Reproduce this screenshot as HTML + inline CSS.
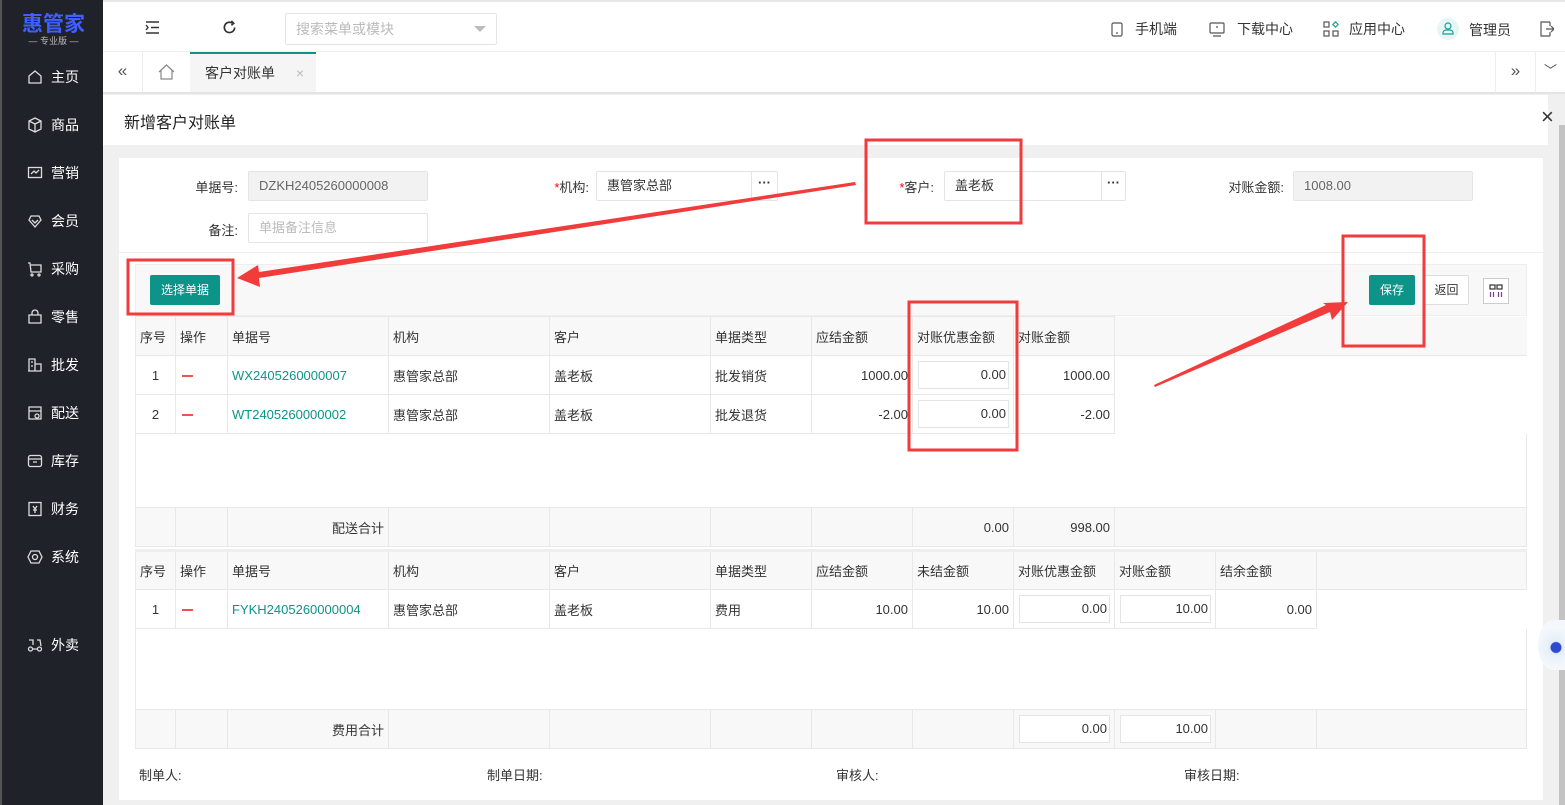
<!DOCTYPE html>
<html><head><meta charset="utf-8">
<style>
*{box-sizing:border-box;margin:0;padding:0}
body{width:1565px;height:805px;overflow:hidden;position:relative;background:#f0f0f0;font-family:"Liberation Sans","Noto Sans CJK SC",sans-serif;font-size:13px;color:#333}
.abs{position:absolute}
#side{left:0;top:0;width:103px;height:805px;background:#1f2228;border-left:2px solid #555}
.logo{left:0;top:8px;width:103px;text-align:center;color:#3f5fff;font-weight:bold;font-size:21px;letter-spacing:0}
.logo2{left:0;top:34px;width:103px;text-align:center;color:#bbb;font-size:9px}
.nav{left:25px;color:#fff;font-size:14px;display:flex;align-items:center}
.nav svg{margin-right:8px}
#head{left:103px;top:0;width:1462px;height:52px;background:#fff;border-top:2px solid #e8e8e8;border-bottom:1px solid #eee}
#tabs{left:103px;top:52px;width:1462px;height:42px;background:#fff;border-bottom:2px solid #e4e4e4}
#title{left:103px;top:95px;width:1445px;height:50px;background:#fff}
#card{left:119px;top:158px;width:1424px;height:642px;background:#fff}
.inp{position:absolute;height:30px;border:1px solid #e4e4e4;border-radius:2px;padding-left:10px;line-height:28px;font-size:13px}
.lbl{position:absolute;font-size:13px;text-align:right}
table{border-collapse:collapse;position:absolute;table-layout:fixed}
td{border:1px solid #e8e8e8;height:39px;padding:0 4px;font-size:13px;white-space:nowrap}
.g{background:#f8f8f8}
.r{text-align:right}.c{text-align:center}
.lnk{color:#0d9488}
.dash::before{content:"";display:inline-block;width:11px;height:2px;background:#f0524f;vertical-align:middle;margin-left:2px}
.box{display:inline-block;width:91px;height:28px;border:1px solid #e4e4e4;line-height:26px;text-align:right;padding-right:2px;background:#fff}
</style></head><body>
<div id="side" class="abs">
<div class="abs logo">惠管家</div>
<div class="abs logo2">— 专业版 —</div>
<div class="abs nav" style="top:67px"><svg width="16" height="16" viewBox="0 0 16 16" fill="none" stroke="#ddd" stroke-width="1.3"><path d="M2 7L8 2l6 5v7H2z"/></svg>主页</div>
<div class="abs nav" style="top:115px"><svg width="16" height="16" viewBox="0 0 16 16" fill="none" stroke="#ddd" stroke-width="1.3"><path d="M8 1l6 3v8l-6 3-6-3V4zM2 4l6 3 6-3M8 7v8"/></svg>商品</div>
<div class="abs nav" style="top:163px"><svg width="16" height="16" viewBox="0 0 16 16" fill="none" stroke="#ddd" stroke-width="1.3"><rect x="1.5" y="2.5" width="13" height="10"/><path d="M4 9l3-3 2 2 3-3"/></svg>营销</div>
<div class="abs nav" style="top:211px"><svg width="16" height="16" viewBox="0 0 16 16" fill="none" stroke="#ddd" stroke-width="1.3"><path d="M8 14L2 7l2-4h8l2 4z"/><path d="M5 7l3 3 3-3"/></svg>会员</div>
<div class="abs nav" style="top:259px"><svg width="16" height="16" viewBox="0 0 16 16" fill="none" stroke="#ddd" stroke-width="1.3"><path d="M1 2h2l1 9h10V4H4"/><circle cx="5" cy="14" r="1"/><circle cx="12" cy="14" r="1"/></svg>采购</div>
<div class="abs nav" style="top:307px"><svg width="16" height="16" viewBox="0 0 16 16" fill="none" stroke="#ddd" stroke-width="1.3"><path d="M2 6h12v8H2zM5 6V4a3 3 0 016 0v2"/></svg>零售</div>
<div class="abs nav" style="top:355px"><svg width="16" height="16" viewBox="0 0 16 16" fill="none" stroke="#ddd" stroke-width="1.3"><path d="M2 14V2h6v12M8 7h6v7H1M4 5h2M4 9h2"/></svg>批发</div>
<div class="abs nav" style="top:403px"><svg width="16" height="16" viewBox="0 0 16 16" fill="none" stroke="#ddd" stroke-width="1.3"><path d="M2 2h12v4H2zM2 6v8h12V6"/><circle cx="10" cy="11" r="2"/></svg>配送</div>
<div class="abs nav" style="top:451px"><svg width="16" height="16" viewBox="0 0 16 16" fill="none" stroke="#ddd" stroke-width="1.3"><rect x="1.5" y="2.5" width="13" height="11" rx="2"/><path d="M2 6h12M6 9h4"/></svg>库存</div>
<div class="abs nav" style="top:499px"><svg width="16" height="16" viewBox="0 0 16 16" fill="none" stroke="#ddd" stroke-width="1.3"><rect x="2" y="1.5" width="12" height="13"/><path d="M6 5l2 3 2-3M6 9h4M8 8v4"/></svg>财务</div>
<div class="abs nav" style="top:547px"><svg width="16" height="16" viewBox="0 0 16 16" fill="none" stroke="#ddd" stroke-width="1.3"><path d="M4 2h8l3 6-3 6H4L1 8z"/><circle cx="8" cy="8" r="2.5"/></svg>系统</div>
<div class="abs nav" style="top:635px"><svg width="16" height="16" viewBox="0 0 16 16" fill="none" stroke="#ddd" stroke-width="1.3"><circle cx="3.5" cy="12" r="2"/><circle cx="12.5" cy="12" r="2"/><path d="M2 3h4v5M10 3h3l1 6M6 12h4"/></svg>外卖</div>
</div>

<div id="head" class="abs">
<svg class="abs" style="left:42px;top:19px" width="15" height="13" viewBox="0 0 15 13" fill="none" stroke="#333" stroke-width="1.4"><path d="M1 1h13M6 6.5h8M1 12h13M1 4l2 2.5L1 9"/></svg>
<svg class="abs" style="left:119px;top:18px" width="15" height="15" viewBox="0 0 16 16" fill="none" stroke="#333" stroke-width="1.8"><path d="M13.5 8A5.5 5.5 0 1 1 11 3.3"/><path d="M10 1l2.5 2.5L10 5.5"/></svg>
<div class="abs" style="left:182px;top:11px;width:212px;height:32px;border:1px solid #e4e4e4;border-radius:2px;color:#bbb;line-height:30px;padding-left:10px;font-size:14px">搜索菜单或模块<span style="position:absolute;right:10px;top:12px;border:6px solid transparent;border-top:6px solid #bbb;border-bottom:0"></span></div>
<div class="abs" style="left:1008px;top:17px;font-size:14px;display:flex;gap:0;align-items:center"><svg width="12" height="15" viewBox="0 0 12 15" fill="none" stroke="#555" stroke-width="1.2"><rect x="1" y="1" width="10" height="13" rx="1.5"/><path d="M5 11h2"/></svg><span style="margin-left:12px">手机端</span></div>
<div class="abs" style="left:1106px;top:17px;font-size:14px;display:flex;align-items:center"><svg width="16" height="15" viewBox="0 0 16 15" fill="none" stroke="#555" stroke-width="1.2"><rect x="1" y="1" width="14" height="10" rx="1"/><path d="M4 14h8M8 4v2"/></svg><span style="margin-left:12px">下载中心</span></div>
<div class="abs" style="left:1220px;top:17px;font-size:14px;display:flex;align-items:center"><svg width="16" height="16" viewBox="0 0 16 16" fill="none" stroke="#555" stroke-width="1.2"><rect x="1" y="1" width="5" height="5"/><rect x="1" y="10" width="5" height="5"/><rect x="10" y="10" width="5" height="5"/><path d="M12.5 0.8l2.7 2.7-2.7 2.7-2.7-2.7z" stroke="#14a098"/></svg><span style="margin-left:10px">应用中心</span></div>
<div class="abs" style="left:1334px;top:16px;width:22px;height:22px;border-radius:50%;background:#e6f6f4"><svg style="margin:4px 0 0 5px" width="12" height="13" viewBox="0 0 12 13" fill="none" stroke="#14a098" stroke-width="1.2"><circle cx="6" cy="4" r="3"/><path d="M1 12h10v-1a3 3 0 00-3-3H4a3 3 0 00-3 3z"/></svg></div>
<div class="abs" style="left:1366px;top:18px;font-size:14px">管理员</div>
<svg class="abs" style="left:1437px;top:19px" width="14" height="16" viewBox="0 0 14 16" fill="none" stroke="#555" stroke-width="1.2"><path d="M10 1H1v14h9M10 11v4M10 1v4M6 8h8M11 5l3 3-3 3"/></svg>
</div>

<div id="tabs" class="abs">
<div class="abs" style="left:0;top:0;width:40px;height:40px;border-right:1px solid #eee;text-align:center;line-height:38px;font-size:17px;color:#555">«</div>
<svg class="abs" style="left:55px;top:12px" width="17" height="16" viewBox="0 0 17 16" fill="none" stroke="#888" stroke-width="1.2"><path d="M1 8L8.5 1 16 8M3 6v9h11V6"/></svg>
<div class="abs" style="left:87px;top:0;width:126px;height:40px;background:#f5f5f5;border-top:2px solid #0d9488;line-height:38px;padding-left:15px;font-size:14px">客户对账单<span style="position:absolute;right:12px;color:#bbb">×</span></div>
<div class="abs" style="left:1392px;top:0;width:40px;height:40px;border-left:1px solid #eee;text-align:center;line-height:38px;font-size:17px;color:#555">»</div>
<div class="abs" style="left:1432px;top:0;width:30px;height:40px;border-left:1px solid #eee;text-align:center;line-height:38px;color:#555">﹀</div>
</div>

<div id="title" class="abs"><div class="abs" style="left:21px;top:14px;font-size:16px;color:#222">新增客户对账单</div></div>
<div class="abs" style="left:1548px;top:95px;width:17px;height:710px;background:#f0f0f0"></div>
<div class="abs" style="left:1559px;top:125px;width:6px;height:680px;background:#c3c3c3"></div>
<div class="abs" style="left:1541px;top:104px;font-size:22px;color:#333;z-index:5">×</div>

<div id="card" class="abs">
<div class="lbl" style="left:29px;top:19px;width:90px">单据号:</div>
<div class="inp" style="left:129px;top:13px;width:180px;background:#f2f2f2;color:#666">DZKH2405260000008</div>
<div class="lbl" style="left:29px;top:62px;width:90px">备注:</div>
<div class="inp" style="left:129px;top:55px;width:180px;color:#bbb">单据备注信息</div>
<div class="lbl" style="left:400px;top:19px;width:70px"><span style="color:red">*</span>机构:</div>
<div class="inp" style="left:477px;top:13px;width:182px">惠管家总部<span style="position:absolute;right:0;top:0;width:26px;height:28px;border-left:1px solid #e4e4e4;text-align:center;font-weight:bold;line-height:22px">···</span></div>
<div class="lbl" style="left:745px;top:19px;width:70px"><span style="color:red">*</span>客户:</div>
<div class="inp" style="left:825px;top:13px;width:182px">盖老板<span style="position:absolute;right:0;top:0;width:24px;height:28px;border-left:1px solid #e4e4e4;text-align:center;font-weight:bold;line-height:22px">···</span></div>
<div class="lbl" style="left:1085px;top:19px;width:80px">对账金额:</div>
<div class="inp" style="left:1174px;top:13px;width:180px;background:#f2f2f2;color:#666">1008.00</div>
<div class="abs" style="left:0;top:94px;width:1424px;height:1px;background:#eee"></div>
<div class="abs" style="left:16px;top:106px;width:1392px;height:52px;background:#f8f8f8;border:1px solid #eee"></div>
<div class="abs" style="left:31px;top:117px;width:70px;height:30px;background:#0d9488;color:#fff;border-radius:2px;text-align:center;line-height:30px;font-size:12px">选择单据</div>
<div class="abs" style="left:1250px;top:117px;width:46px;height:30px;background:#0d9488;color:#fff;border-radius:2px;text-align:center;line-height:30px;font-size:12px">保存</div>
<div class="abs" style="left:1305px;top:117px;width:45px;height:30px;border:1px solid #ddd;border-radius:2px;text-align:center;line-height:28px;font-size:12px;background:#fff">返回</div>
<div class="abs" style="left:1364px;top:120px;width:26px;height:26px;border:1px solid #ccc;background:#fff"><svg style="margin:5px" width="14" height="14" viewBox="0 0 14 14" fill="none" stroke="#333" stroke-width="1.2"><rect x="1" y="1" width="5" height="4"/><rect x="8" y="1" width="5" height="4"/><path d="M1.5 8v5M4.5 8v5M9.5 8v5M12.5 8v5" stroke="#7a3d8a"/></svg></div>
</div>

<!-- table 1 -->
<table style="left:135px;top:316px;width:1392px">
<colgroup><col style="width:40px"><col style="width:52px"><col style="width:161px"><col style="width:161px"><col style="width:161px"><col style="width:101px"><col style="width:101px"><col style="width:101px"><col style="width:101px"><col></colgroup>
<tr class="g"><td>序号</td><td>操作</td><td>单据号</td><td>机构</td><td>客户</td><td>单据类型</td><td>应结金额</td><td>对账优惠金额</td><td>对账金额</td><td style="border-right:0;border-top:0"></td></tr>
<tr><td class="c">1</td><td class="dash"></td><td class="lnk">WX2405260000007</td><td>惠管家总部</td><td>盖老板</td><td>批发销货</td><td class="r" style="padding-right:4px">1000.00</td><td class="r" style="padding:0 5px"><span class="box">0.00</span></td><td class="r">1000.00</td><td style="border:0"></td></tr>
<tr><td class="c">2</td><td class="dash"></td><td class="lnk">WT2405260000002</td><td>惠管家总部</td><td>盖老板</td><td>批发退货</td><td class="r" style="padding-right:4px">-2.00</td><td class="r" style="padding:0 5px"><span class="box">0.00</span></td><td class="r">-2.00</td><td style="border:0"></td></tr>
<tr><td colspan="10" style="height:74px;border-top:0"></td></tr>
<tr class="g"><td></td><td></td><td class="r">配送合计</td><td></td><td></td><td></td><td></td><td class="r">0.00</td><td class="r">998.00</td><td></td></tr>
</table>
<!-- table 2 -->
<table style="left:135px;top:549px;width:1392px;border-top:3px solid #eee">
<colgroup><col style="width:40px"><col style="width:52px"><col style="width:161px"><col style="width:161px"><col style="width:161px"><col style="width:101px"><col style="width:101px"><col style="width:101px"><col style="width:101px"><col style="width:101px"><col style="width:101px"><col></colgroup>
<tr class="g"><td>序号</td><td>操作</td><td>单据号</td><td>机构</td><td>客户</td><td>单据类型</td><td>应结金额</td><td>未结金额</td><td>对账优惠金额</td><td>对账金额</td><td>结余金额</td><td></td></tr>
<tr><td class="c">1</td><td class="dash"></td><td class="lnk">FYKH2405260000004</td><td>惠管家总部</td><td>盖老板</td><td>费用</td><td class="r">10.00</td><td class="r">10.00</td><td class="r" style="padding:0 5px"><span class="box">0.00</span></td><td class="r" style="padding:0 5px"><span class="box">10.00</span></td><td class="r">0.00</td><td style="border:0"></td></tr>
<tr><td colspan="12" style="height:81px;border-top:0"></td></tr>
<tr class="g"><td></td><td></td><td class="r">费用合计</td><td></td><td></td><td></td><td></td><td></td><td class="r" style="padding:0 5px"><span class="box">0.00</span></td><td class="r" style="padding:0 5px"><span class="box">10.00</span></td><td></td><td></td></tr>
</table>

<div class="abs" style="left:139px;top:765px">制单人:</div>
<div class="abs" style="left:487px;top:765px">制单日期:</div>
<div class="abs" style="left:836px;top:765px">审核人:</div>
<div class="abs" style="left:1184px;top:765px">审核日期:</div>

<div class="abs" style="left:1538px;top:620px;width:30px;height:50px;border-radius:50% 0 0 50%;background:radial-gradient(circle at 60% 55%,#2d4bd1 0 5px,#e4eef8 6px,#f4f8fc 20px)"></div>

<svg class="abs" style="left:0;top:0" width="1565" height="805">
<g fill="none" stroke="#f23b3b" stroke-width="3">
<rect x="128" y="260" width="105" height="54"/>
<rect x="866" y="140" width="155" height="83"/>
<rect x="909" y="302" width="108" height="148"/>
<rect x="1343" y="236" width="81" height="110"/>
</g>
<g fill="#f23b3b">
<polygon points="855,182 856,185 259,278 260,287 237,278 258,265 259,272"/>
<polygon points="1155,387 1154,385 1326,305 1323,303 1348,302 1332,320 1330,312"/>
</g>
</svg>
</body></html>
